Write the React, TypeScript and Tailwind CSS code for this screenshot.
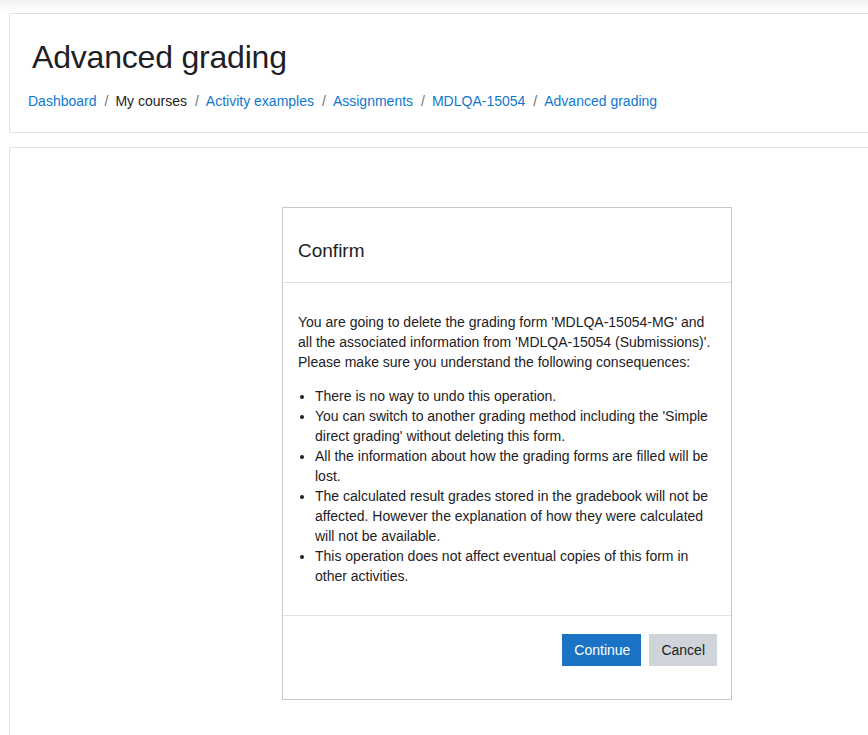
import React from 'react';

const crumbs = [
  { label: 'Dashboard', link: true },
  { label: 'My courses', link: false },
  { label: 'Activity examples', link: true },
  { label: 'Assignments', link: true },
  { label: 'MDLQA-15054', link: true },
  { label: 'Advanced grading', link: true },
];

const consequences = [
  'There is no way to undo this operation.',
  "You can switch to another grading method including the 'Simple direct grading' without deleting this form.",
  'All the information about how the grading forms are filled will be lost.',
  'The calculated result grades stored in the gradebook will not be affected. However the explanation of how they were calculated will not be available.',
  'This operation does not affect eventual copies of this form in other activities.',
];

export default function App() {
  return (
    <div className="h-[735px] w-[868px] overflow-hidden bg-white text-[#1d2125] font-['Liberation_Sans',Arial,sans-serif]">
      {/* Navbar shadow */}
      <div className="h-[13px] bg-gradient-to-b from-[#f1f1f1] to-white" />

      <div className="pl-[9px] w-[900px]">
        {/* Page header */}
        <header className="border border-[#dee2e6] pt-[24px] pb-[20px] pl-[18px]">
          <h1 className="ml-[4px] text-[32px] leading-[38px] font-normal tracking-[-0.2px]">Advanced grading</h1>
          <nav className="mt-[15px] flex items-center text-[14px] leading-[21px]">
            {crumbs.map((c, i) => (
              <React.Fragment key={c.label}>
                {i > 0 && <span className="pl-[8px] pr-[7px] text-[#6a737b]">/</span>}
                <span className={c.link ? 'text-[#1177d1]' : 'text-[#1d2125]'}>{c.label}</span>
              </React.Fragment>
            ))}
          </nav>
        </header>

        {/* Main region */}
        <section className="mt-[14px] h-[600px] border border-[#dee2e6] pt-[59px]">
          <div className="ml-[272px] w-[450px] border border-[#c8c8c8] bg-white">
            <div className="border-b border-[#dee2e6] px-[15px] pt-[30px] pb-[18px]">
              <h4 className="text-[19px] leading-[26px] font-normal">Confirm</h4>
            </div>
            <div className="border-b border-[#dee2e6] px-[15px] pt-[29px] pb-[29px] text-[14px] leading-[20px]">
              <p>
                You are going to delete the grading form 'MDLQA-15054-MG' and all the associated information from
                'MDLQA-15054 (Submissions)'. Please make sure you understand the following consequences:
              </p>
              <ul className="mt-[14px] list-disc pl-[17px]">
                {consequences.map((c) => (
                  <li key={c}>{c}</li>
                ))}
              </ul>
            </div>
            <div className="flex justify-end gap-[8px] px-[14px] pt-[18px] pb-[33px]">
              <button className="h-[32px] bg-[#1a73c4] pl-[12px] pr-[11px] text-[14px] text-white">Continue</button>
              <button className="h-[32px] bg-[#ced4da] px-[12px] text-[14px] text-[#1d2125]">Cancel</button>
            </div>
          </div>
        </section>
      </div>
    </div>
  );
}
